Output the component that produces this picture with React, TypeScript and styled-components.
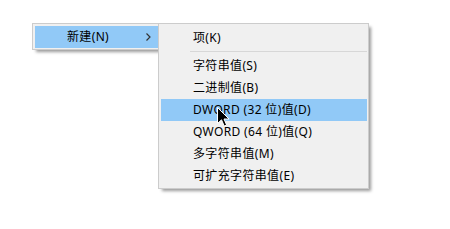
import styled, { createGlobalStyle } from "styled-components"

const Global = createGlobalStyle`
  html, body {
    margin: 0;
    background: #fff;
  }
  body {
    font-family: "Noto Sans", "Noto Sans CJK SC", sans-serif;
    font-size: 12px;
    letter-spacing: 0.35px;
    color: #000;
  }
`

const Desktop = styled.div`
  position: relative;
  width: 450px;
  height: 229px;
  overflow: hidden;
`

const Menu = styled.div<{ $left: number; $top: number; $width: number; $padTop: number }>`
  position: absolute;
  left: ${(p) => p.$left}px;
  top: ${(p) => p.$top}px;
  width: ${(p) => p.$width}px;
  box-sizing: border-box;
  display: flex;
  flex-direction: column;
  padding: ${(p) => p.$padTop}px 1px 1px 2px;
  background: #f0f0f0;
  border: 1px solid #cccccc;
  box-shadow: 3px 3px 3px -1px rgba(0, 0, 0, 0.4);
`

const Item = styled.div<{ $active?: boolean }>`
  position: relative;
  display: flex;
  align-items: center;
  height: 22px;
  padding-left: 32px;
  background: ${(p) => (p.$active ? "#91c9f7" : "transparent")};
  white-space: nowrap;
  line-height: 22px;
`

const Chevron = styled.svg`
  position: absolute;
  left: 111px;
  top: 7px;
`

const Separator = styled.div`
  height: 1px;
  margin: 2px 0 3px 29px;
  background: #d7d7d7;
`

const Cursor = styled.svg`
  position: absolute;
  left: 217px;
  top: 107px;
`

const items = [
  "字符串值(S)",
  "二进制值(B)",
  "DWORD (32 位)值(D)",
  "QWORD (64 位)值(Q)",
  "多字符串值(M)",
  "可扩充字符串值(E)",
]

export default function App() {
  return (
    <>
      <Global />
      <Desktop>
        <Menu $left={32} $top={23} $width={136} $padTop={2}>
          <Item $active>
            新建(N)
            <Chevron width="5" height="8" viewBox="0 0 5 8">
              <path d="M0.5 0.5 L4 4 L0.5 7.5" fill="none" stroke="#333" strokeWidth="1.2" />
            </Chevron>
          </Item>
        </Menu>
        <Menu $left={158} $top={23} $width={211} $padTop={3}>
          <Item>项(K)</Item>
          <Separator />
          {items.map((t, i) => (
            <Item key={t} $active={i === 2}>
              {t}
            </Item>
          ))}
        </Menu>
        <Cursor width="13" height="21" viewBox="0 0 13 21">
          <path
            d="M0.5 0.5 L0.5 16.5 L4.5 12.8 L7.2 19 L9.6 18 L7 12 L12 12 Z"
            fill="#000"
            stroke="#fff"
            strokeWidth="1"
            strokeLinejoin="round"
          />
        </Cursor>
      </Desktop>
    </>
  )
}
